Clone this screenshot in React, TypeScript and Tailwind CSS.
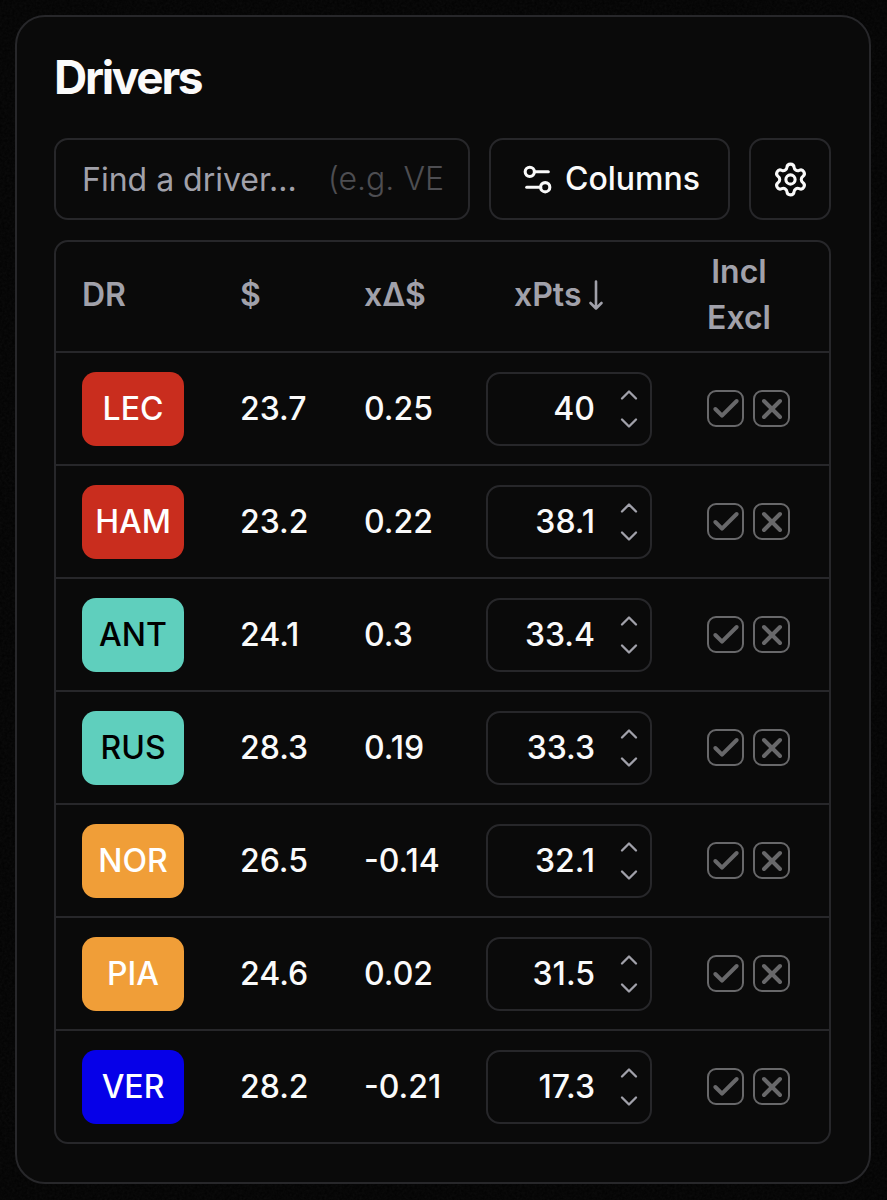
import { useState } from "react"
import { Check, ChevronDown, ChevronUp, Settings, Settings2, X } from "lucide-react"

interface Driver {
  code: string
  price: string
  delta: string
  points: string
  badge: string
}

const FERRARI = "bg-[#c92d1e] text-white"
const MERCEDES = "bg-[#5fcfbd] text-black"
const MCLAREN = "bg-[#f09e38] text-white"
const RED_BULL = "bg-[#0600e8] text-white"

const drivers: Driver[] = [
  { code: "LEC", price: "23.7", delta: "0.25", points: "40", badge: FERRARI },
  { code: "HAM", price: "23.2", delta: "0.22", points: "38.1", badge: FERRARI },
  { code: "ANT", price: "24.1", delta: "0.3", points: "33.4", badge: MERCEDES },
  { code: "RUS", price: "28.3", delta: "0.19", points: "33.3", badge: MERCEDES },
  { code: "NOR", price: "26.5", delta: "-0.14", points: "32.1", badge: MCLAREN },
  { code: "PIA", price: "24.6", delta: "0.02", points: "31.5", badge: MCLAREN },
  { code: "VER", price: "28.2", delta: "-0.21", points: "17.3", badge: RED_BULL },
]

export default function App() {
  const [query, setQuery] = useState("")
  const visible = drivers.filter((d) => d.code.includes(query.trim().toUpperCase()))

  return (
    <main className="relative isolate min-h-screen bg-[#020202] py-[15px] pr-4 pl-[15px] font-['Inter',sans-serif] text-[32px] leading-[46px] font-medium text-[#fafafa]">
      <Grain />
      <section className="rounded-[30px] border-2 border-[#27272a] bg-[#0a0a0a] pt-[37px] pr-[38px] pb-[38px] pl-[37px]">
        <h1 className="text-[46px] leading-[46px] font-bold tracking-tighter">Drivers</h1>

        <div className="mt-[38px] flex gap-[19px]">
          <SearchBox value={query} onChange={setQuery} />
          <button
            type="button"
            className="flex h-[82px] shrink-0 items-center gap-[9px] rounded-[14px] border-2 border-[#27272a] px-7"
          >
            <Settings2 size={37} />
            Columns
          </button>
          <button
            type="button"
            aria-label="Settings"
            className="flex h-[82px] w-[82px] shrink-0 items-center justify-center rounded-[14px] border-2 border-[#27272a]"
          >
            <Settings size={37} />
          </button>
        </div>

        <div className="mt-5 overflow-hidden rounded-[14px] border-2 border-[#27272a]">
          <table className="w-full table-fixed border-separate border-spacing-0 text-left">
            <colgroup>
              <col className="w-[156px]" />
              <col className="w-[124px]" />
              <col className="w-[122px]" />
              <col className="w-[221px]" />
              <col />
            </colgroup>
            <thead className="text-[#a1a1aa]">
              <tr className="h-[109px]">
                <th className="pb-1 pl-[26px] font-semibold">DR</th>
                <th className="pb-1 pl-7 font-semibold">$</th>
                <th className="pb-1 pl-7 font-semibold">xΔ$</th>
                <th className="pb-1 pl-7 font-semibold">
                  <button type="button" className="flex items-center gap-[6px] px-7">
                    xPts
                    <SortArrow />
                  </button>
                </th>
                <th className="pb-1 pl-7 font-semibold">
                  <span className="inline-block text-center">
                    Incl
                    <br />
                    Excl
                  </span>
                </th>
              </tr>
            </thead>
            <tbody>
              {visible.map((driver) => (
                <DriverRow key={driver.code} driver={driver} />
              ))}
            </tbody>
          </table>
        </div>
      </section>
    </main>
  )
}

interface SearchBoxProps {
  value: string
  onChange: (value: string) => void
}

function SearchBox({ value, onChange }: SearchBoxProps) {
  return (
    <div className="relative min-w-0 flex-1 font-normal">
      <input
        type="text"
        aria-label="Find a driver"
        placeholder="Find a driver..."
        value={value}
        onChange={(e) => onChange(e.target.value)}
        className="h-[82px] w-full rounded-[14px] border-2 border-[#27272a] bg-transparent px-[26px] outline-none placeholder:text-[#a1a1aa]"
      />
      {value === "" && (
        <span className="pointer-events-none absolute inset-y-0 right-[26px] flex items-center font-light text-[#4e4e52]">
          (e.g. VE
        </span>
      )}
    </div>
  )
}

function DriverRow({ driver }: { driver: Driver }) {
  const [points, setPoints] = useState(driver.points)

  const step = (amount: number) => {
    setPoints((prev) => String(Math.round((Number(prev) + amount) * 10) / 10))
  }

  return (
    <tr className="h-[113px]">
      <td className="border-t-2 border-[#27272a] pl-[26px]">
        <div className={`flex h-[74px] w-[102px] items-center justify-center rounded-[14px] ${driver.badge}`}>
          {driver.code}
        </div>
      </td>
      <td className="border-t-2 border-[#27272a] pl-7">{driver.price}</td>
      <td className="border-t-2 border-[#27272a] pl-7">{driver.delta}</td>
      <td className="border-t-2 border-[#27272a] pl-7">
        <div className="flex h-[74px] w-[166px] items-center rounded-[14px] border-2 border-[#27272a] pr-[7px]">
          <input
            type="text"
            inputMode="decimal"
            aria-label={`${driver.code} expected points`}
            value={points}
            onChange={(e) => setPoints(e.target.value)}
            className="min-w-0 flex-1 bg-transparent text-right outline-none"
          />
          <div className="ml-5 flex flex-col text-[#a1a1aa]">
            <button type="button" aria-label="Increase" onClick={() => step(0.1)}>
              <ChevronUp size={28} />
            </button>
            <button type="button" aria-label="Decrease" onClick={() => step(-0.1)}>
              <ChevronDown size={28} />
            </button>
          </div>
        </div>
      </td>
      <td className="border-t-2 border-[#27272a] pl-7">
        <div className="flex gap-[9px]">
          <Toggle label={`Include ${driver.code}`} icon={Check} />
          <Toggle label={`Exclude ${driver.code}`} icon={X} />
        </div>
      </td>
    </tr>
  )
}

interface ToggleProps {
  label: string
  icon: typeof Check
}

function Toggle({ label, icon: Icon }: ToggleProps) {
  return (
    <label className="grid h-[37px] w-[37px] place-items-center">
      <input
        type="checkbox"
        aria-label={label}
        className="peer col-start-1 row-start-1 h-full w-full appearance-none rounded-[9px] border-2 border-[#68686a] checked:border-white"
      />
      <Icon
        size={32}
        strokeWidth={3}
        className="pointer-events-none col-start-1 row-start-1 text-[#68686a] peer-checked:text-white"
      />
    </label>
  )
}

function SortArrow() {
  return (
    <svg width="18" height="32" viewBox="0 0 18 32" fill="none" stroke="currentColor" strokeWidth="2.6" strokeLinecap="round" strokeLinejoin="round">
      <path d="M9 2.500v27M3.5 24 9 29.500l5.500-5.500" />
    </svg>
  )
}

// Faint film grain behind the card
function Grain() {
  return (
    <svg aria-hidden="true" className="absolute inset-0 -z-10 h-full w-full opacity-5">
      <filter id="grain">
        <feTurbulence type="fractalNoise" baseFrequency="0.4" numOctaves="2" />
        <feColorMatrix type="saturate" values="0" />
      </filter>
      <rect width="100%" height="100%" filter="url(#grain)" />
    </svg>
  )
}
